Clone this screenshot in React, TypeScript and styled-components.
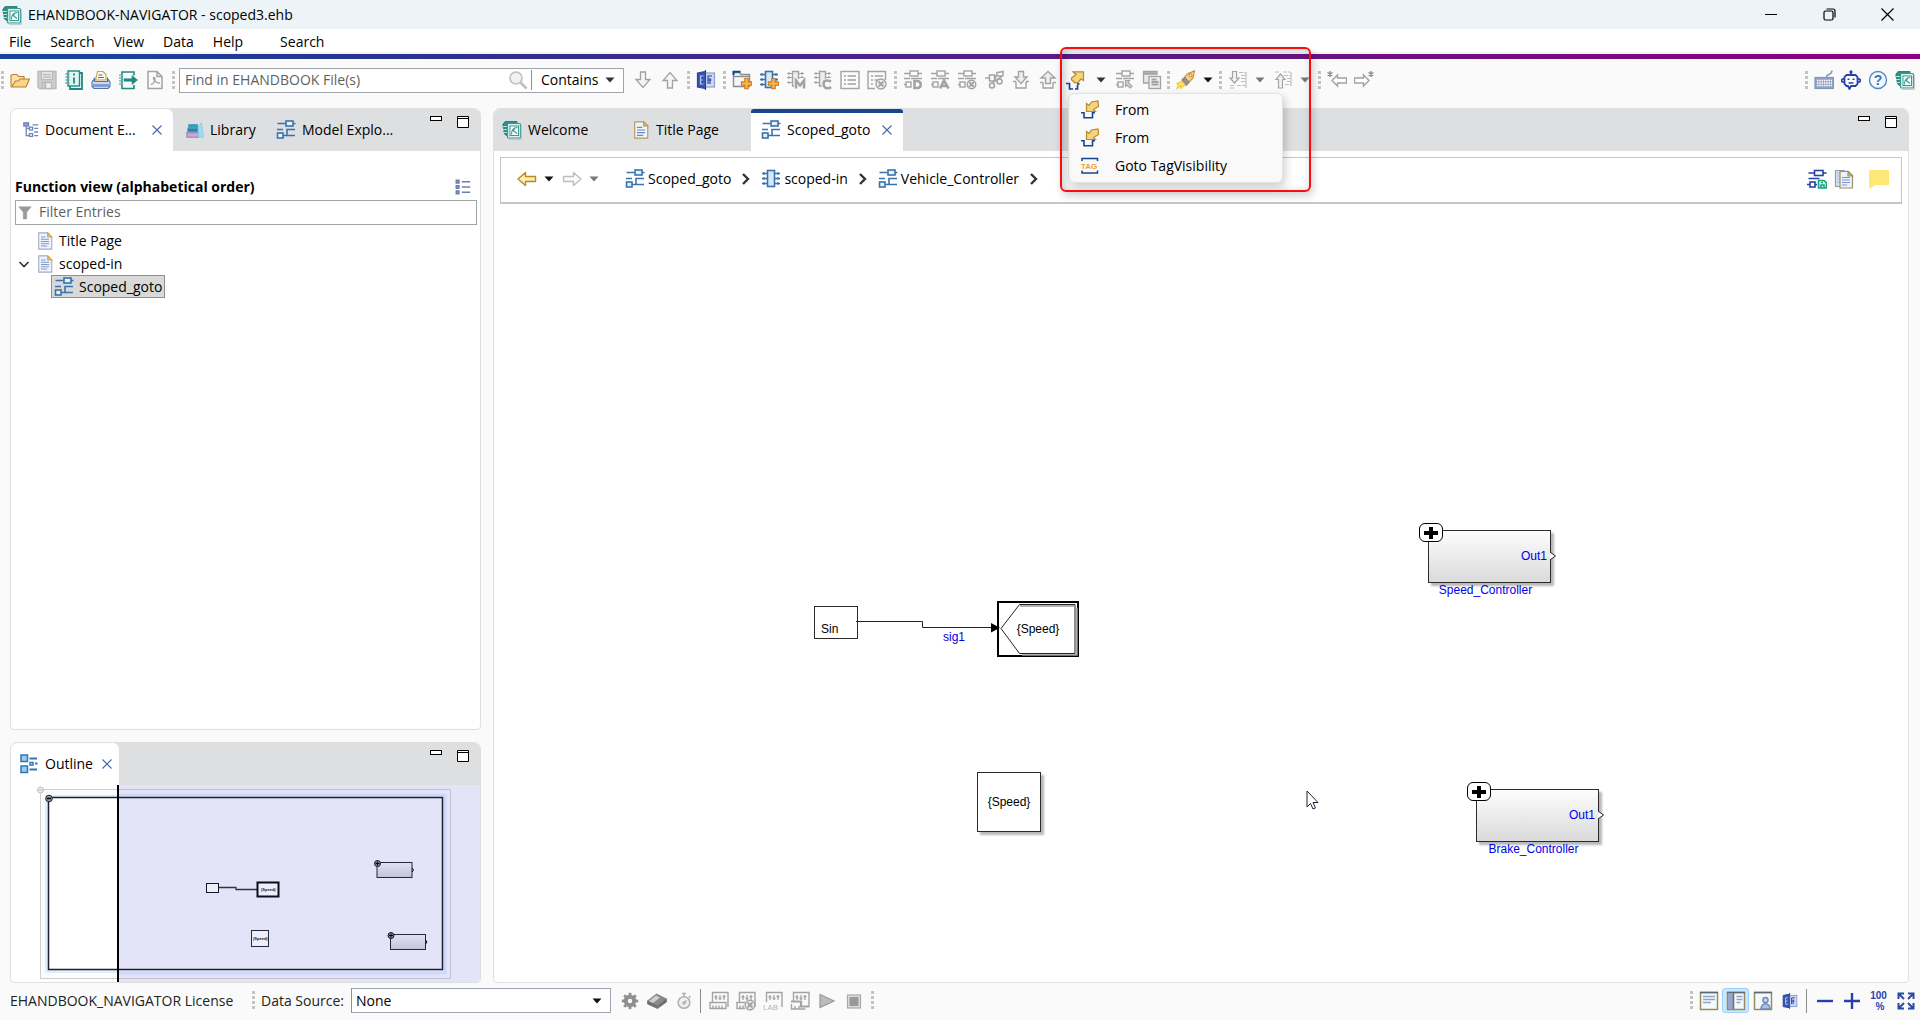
import React from "react";
import styled, { createGlobalStyle, css } from "styled-components";

const uiFont = '"Open Sans", "Noto Sans", sans-serif';
const diagramFont = '"Liberation Sans", Arial, sans-serif';
const BLUE = "#3a72ab";
const NAVY = "#17468f";
const GREY = "#a3a3a3";
const TEAL = "#1f8a80";
const ROYAL = "#2743a6";

const GlobalStyle = createGlobalStyle`
  * { box-sizing: border-box; }
  body { margin: 0; background: #fafafa; color: #000; font: 14px/20px ${uiFont}; }
  button, input, select { font: inherit; color: inherit; }
`;

/* ---------- shell ---------- */

const Shell = styled.div`
  display: flex;
  flex-direction: column;
  min-height: 100vh;
`;

const TitleBar = styled.header`
  display: flex;
  align-items: center;
  height: 29px;
  padding: 0 17px 0 2px;
  gap: 6px;
  background: #ecf4f8;
`;

const WindowTitle = styled.h1`
  flex: 1;
  margin: 0;
  font-size: 14px;
  font-weight: 400;
`;

const WindowButtons = styled.div`
  display: flex;
  gap: 26px;
`;

const PlainButton = styled.button`
  display: inline-flex;
  align-items: center;
  justify-content: center;
  padding: 0;
  border: 0;
  background: transparent;
  flex: none;
`;

const WindowButton = styled(PlainButton)`
  width: 32px;
  height: 28px;
`;

const MenuBar = styled.nav`
  display: flex;
  align-items: center;
  height: 25px;
  padding: 2px 0 0 9px;
  gap: 19px;
  background: #fff;
  border-bottom: 2px solid #f3f3f5;
`;

const MenuButton = styled(PlainButton)<{ $apart?: boolean }>`
  height: 22px;
  margin-left: ${(p) => (p.$apart ? "18px" : "0")};
`;

const BrandStripe = styled.div`
  height: 5px;
  background: linear-gradient(90deg, #14469a 0%, #2f2f90 25%, #50208a 50%, #6c1280 70%, #8c0080 100%);
`;

/* ---------- toolbar ---------- */

const Toolbar = styled.div`
  display: flex;
  align-items: center;
  height: 42px;
  padding: 0 2px 0 0;
`;

const Spacer = styled.div`
  flex: 1;
`;

const Grip = styled.span<{ $tight?: boolean }>`
  flex: none;
  width: 6px;
  height: 19px;
  background: repeating-linear-gradient(180deg, #c3c3c3 0 3px, transparent 3px 5px) 1px 0 / 3px 19px no-repeat;
  &:not(:first-child) {
    margin-left: ${(p) => (p.$tight ? "1px" : "3px")};
  }
`;

const IconButton = styled(PlainButton)<{ $on?: boolean }>`
  width: 27px;
  height: 25px;
  ${(p) =>
    p.$on &&
    css`
      background: #cce8ff;
      border: 1px solid #99d1ff;
      border-radius: 3px;
    `}
`;

const ArrowButton = styled(PlainButton)<{ $wide?: boolean }>`
  width: ${(p) => (p.$wide ? "23px" : "18px")};
  padding-left: ${(p) => (p.$wide ? "3px" : "0")};
  height: 25px;
`;

const SearchField = styled.div`
  display: flex;
  align-items: center;
  width: 445px;
  height: 25px;
  margin: 0 5px 0 2px;
  padding: 0 6px 0 5px;
  background: #fff;
  border: 1px solid #a2a3a8;
`;

const BareInput = styled.input`
  flex: 1;
  min-width: 0;
  height: 22px;
  padding: 0 0 2px;
  border: 0;
  outline: 0;
  background: transparent;
  &::placeholder {
    color: #5f5f5f;
    opacity: 1;
  }
`;

const SelectWrap = styled.div<{ $width: number; $boxed?: boolean }>`
  display: flex;
  align-items: center;
  width: ${(p) => p.$width}px;
  height: ${(p) => (p.$boxed ? 25 : 20)}px;
  padding-right: ${(p) => (p.$boxed ? 8 : 2)}px;
  background: #fff;
  border: ${(p) => (p.$boxed ? "1px solid #a2a3b0" : "0")};
  border-left: 1px solid #8f8f94;
`;

const BareSelect = styled.select`
  appearance: none;
  flex: 1;
  min-width: 0;
  height: 22px;
  padding: 0 4px 0 9px;
  border: 0;
  outline: 0;
  background: transparent;
`;

const DataSelect = styled(BareSelect)`
  padding-left: 4px;
`;

const GotoGroup = styled.div`
  position: relative;
  display: flex;
  align-items: center;
`;

const Callout = styled.div`
  position: absolute;
  z-index: 5;
  left: -1px;
  top: -21px;
  width: 251px;
  height: 145px;
  border: 2px solid #f80d10;
  border-radius: 6px;
  box-shadow: inset 2px 2px 8px rgba(0, 0, 0, 0.22), 2px 4px 8px rgba(0, 0, 0, 0.18);
  pointer-events: none;
`;

const PopupMenu = styled.ul`
  position: absolute;
  z-index: 4;
  left: 7px;
  top: 25px;
  width: 215px;
  margin: 0;
  padding: 2px 0;
  list-style: none;
  background: #f9f9f9;
  border: 1px solid #e3e3e3;
  border-radius: 6px;
  box-shadow: 2px 4px 10px rgba(0, 0, 0, 0.2);
`;

const PopupItem = styled(PlainButton)`
  display: flex;
  width: 100%;
  height: 28px;
  padding-left: 11px;
  gap: 15px;
  justify-content: flex-start;
`;

/* ---------- panels ---------- */

const Workspace = styled.main`
  flex: 1;
  display: grid;
  grid-template-columns: 471px minmax(0, 1fr);
  gap: 12px;
  padding: 7px 11px 0 10px;
`;

const SideColumn = styled.div`
  display: flex;
  flex-direction: column;
  gap: 12px;
`;

const Panel = styled.section<{ $grow?: boolean }>`
  display: flex;
  flex-direction: column;
  flex: ${(p) => (p.$grow ? "1" : "none")};
  overflow: hidden;
  background: #fff;
  border: 1px solid #dedfe1;
  border-radius: 7px 7px 4px 4px;
`;

const TabStrip = styled.div`
  display: flex;
  height: 42px;
  background: #dedfe1;
`;

const Tab = styled.div<{ $active?: boolean; $accent?: boolean; $width: number; $pad: number }>`
  display: flex;
  align-items: center;
  gap: 6px;
  width: ${(p) => p.$width}px;
  padding-left: ${(p) => p.$pad}px;
  background: ${(p) => (p.$active ? "#fff" : "transparent")};
  border-radius: ${(p) => (p.$accent ? "3px 3px 0 0" : "6px 6px 0 0")};
  border-top: ${(p) => (p.$accent ? `4px solid ${NAVY}` : "0")};
  padding-bottom: ${(p) => (p.$accent ? "4px" : "0")};
`;

const TabButton = styled(PlainButton)`
  gap: 6px;
  height: 30px;
  white-space: nowrap;
`;

const CloseButton = styled(PlainButton)`
  width: 16px;
  height: 16px;
  margin-left: auto;
  margin-right: 8px;
`;

const PanelButtons = styled.div`
  display: flex;
  gap: 13px;
  margin-left: auto;
  padding: 6px 10px 0 0;
`;

const SquareButton = styled(PlainButton)`
  width: 14px;
  height: 14px;
`;

const ExplorerBody = styled.div`
  padding: 26px 3px 12px 4px;
`;

const ExplorerHeading = styled.div`
  display: flex;
  align-items: center;
  justify-content: space-between;
  height: 20px;
  padding-right: 6px;
`;

const Heading = styled.h2`
  margin: 0;
  font-size: 14px;
  line-height: 20px;
  font-weight: 700;
`;

const FilterField = styled.label`
  display: flex;
  align-items: center;
  height: 25px;
  margin-top: 3px;
  padding-left: 2px;
  gap: 7px;
  border: 1px solid #a2a3a8;
`;

const Tree = styled.ul`
  margin: 0;
  padding: 4px 0 0;
  list-style: none;
`;

const TreeRow = styled.li<{ $level: number }>`
  display: flex;
  align-items: center;
  height: 23px;
  padding-left: ${(p) => p.$level * 18}px;
`;

const Twisty = styled(PlainButton)`
  width: 18px;
  height: 20px;
`;

const TreeLabel = styled(PlainButton)<{ $selected?: boolean }>`
  gap: 5px;
  height: 23px;
  padding: 0 2px;
  border: 1px solid ${(p) => (p.$selected ? "#8f8f8f" : "transparent")};
  background: ${(p) => (p.$selected ? "#d9d9d9" : "transparent")};
`;

const OutlineView = styled.svg`
  display: block;
  width: 100%;
  height: 197px;
`;

/* ---------- editor ---------- */

const Breadcrumb = styled.nav`
  display: flex;
  align-items: center;
  height: 47px;
  margin: 6px 6px 0;
  padding: 0 9px 3px 12px;
  border: 1px solid #c6c6c8;
  border-bottom-width: 2px;
`;

const Crumbs = styled.ol`
  display: flex;
  align-items: center;
  margin: 0 0 0 22px;
  padding: 0;
  list-style: none;
`;

const Crumb = styled.li`
  display: flex;
  align-items: center;
`;

const CrumbLink = styled.a`
  display: flex;
  align-items: center;
  gap: 3px;
  color: inherit;
  text-decoration: none;
`;

const CrumbChevron = styled.span`
  display: flex;
  justify-content: center;
  width: 30px;
`;

const NoteButton = styled(IconButton)`
  margin-left: 8px;
`;

const Canvas = styled.div`
  position: relative;
  flex: 1;
  min-height: 700px;
  overflow: hidden;
  font: 12px/14px ${diagramFont};
`;

const Wires = styled.svg`
  position: absolute;
  left: 0;
  top: 0;
  width: 100%;
  height: 100%;
`;

interface Box {
  $x: number;
  $y: number;
  $w: number;
  $h: number;
}

const Block = styled.div<Box & { $shade?: boolean; $shadow?: boolean }>`
  position: absolute;
  left: ${(p) => p.$x}px;
  top: ${(p) => p.$y}px;
  width: ${(p) => p.$w}px;
  height: ${(p) => p.$h}px;
  display: flex;
  align-items: center;
  justify-content: center;
  border: 1px solid #2b2b2b;
  background: ${(p) => (p.$shade ? "linear-gradient(180deg, #fdfdfd, #dadada)" : "#fff")};
  box-shadow: ${(p) => (p.$shadow ? "3px 3px 2px rgba(0, 0, 0, 0.28)" : "none")};
`;

const SourceBlock = styled(Block)`
  align-items: flex-end;
  justify-content: flex-start;
  padding: 0 0 2px 6px;
`;

const GotoBlock = styled(Block)`
  border: 2px solid #000;
  background: transparent;
`;

const SubsystemBlock = styled(Block)`
  justify-content: flex-end;
  padding: 0 3px 1px 0;
  color: #0000e6;
`;

const Expand = styled(PlainButton)`
  position: absolute;
  left: -10px;
  top: -8px;
  width: 24px;
  height: 19px;
  border: 1px solid #000;
  border-radius: 6px;
  background: #fff;
`;

const Port = styled.svg`
  position: absolute;
  right: -7px;
  top: 20px;
`;

const BlockName = styled.span`
  position: absolute;
  left: 0;
  right: 8px;
  top: 52px;
  text-align: center;
`;

const SignalName = styled.span<{ $x: number; $y: number }>`
  position: absolute;
  left: ${(p) => p.$x}px;
  top: ${(p) => p.$y}px;
  color: #0000e6;
`;

const Pointer = styled.svg<{ $x: number; $y: number }>`
  position: absolute;
  left: ${(p) => p.$x}px;
  top: ${(p) => p.$y}px;
`;

/* ---------- status bar ---------- */

const StatusBar = styled.footer`
  display: flex;
  align-items: center;
  height: 37px;
  padding: 0 1px 2px 10px;
`;

const StatusText = styled.span`
  width: 238px;
  color: #222;
`;

const StatusLabel = styled.label`
  width: 94px;
  padding-left: 4px;
  color: #222;
`;

const StatusTools = styled.div`
  display: flex;
  align-items: center;
  margin-left: 5px;
`;

const Divider = styled.span`
  width: 1px;
  height: 24px;
  margin: 0 4px 0 3px;
  background: #8b8b8b;
`;

/* ---------- icons ---------- */

interface GlyphProps {
  children: React.ReactNode;
  size?: number;
  color?: string;
  w?: number;
}

function Glyph({ children, size = 20, color = GREY, w = 1.5 }: GlyphProps) {
  return (
    <svg width={size} height={size} viewBox="0 0 20 20" fill="none" stroke={color} strokeWidth={w} aria-hidden="true">
      {children}
    </svg>
  );
}

const LogoIcon = () => (
  <Glyph color="#3a9b92" w={1.2}>
    <path d="M.8 4.500 3 1.500h12v2H6v13l-3.500-2.500z" fill="#2b8f86" stroke="#1d756d" strokeWidth="0.8" />
    <path d="M1 6.500h4M1 9.500h4M1.500 12.500h4" stroke="#bfe3df" strokeWidth="1" />
    <rect x="5.500" y="3.500" width="13" height="14.500" rx="1" fill="#d9f0ed" />
    <rect x="8" y="6" width="8.500" height="9.500" fill="#fff" strokeWidth="1" />
    <path d="M9.500 14.500c0-4 2-7 6-7M10.500 10l4.500 3.500M13 7.500l-1.500 3" strokeWidth="1.200" />
    <path d="M19.300 5v14.200H7" stroke="#b6bcbc" strokeWidth="1" />
  </Glyph>
);

const DiagramIcon = () => (
  <Glyph color={BLUE} w={1.6}>
    <path d="M1.500 3.500h8M17 3.500h2.500M1 9.500h6M11 15.500v-6h8M7 15.500h12" />
    <rect x="10" y="1" width="7" height="5" fill="#e6f2fc" />
    <rect x="1.500" y="13" width="5.500" height="5" fill="#e6f2fc" />
  </Glyph>
);
const GreyDiagram = ({ children }: { children: React.ReactNode }) => (
  <Glyph w={1.4}>
    <path d="M1 3.500h6M15 3.500h4M1 8.500h6M1 14.500h2M8 8.500h11" />
    <rect x="7" y="1" width="8" height="5" />
    <rect x="3" y="12" width="5" height="5" />
    {children}
  </Glyph>
);
const DiagramDIcon = () => (
  <GreyDiagram>
    <path d="M11.500 11v7h2.500c5 0 5-7 0-7z" fill="#fff" strokeWidth="2.600" />
  </GreyDiagram>
);
const DiagramAIcon = () => (
  <GreyDiagram>
    <path d="m10 18.500 4-8 4.500 8M12 16h5" fill="#fff" strokeWidth="2.600" />
  </GreyDiagram>
);
const DiagramXIcon = () => (
  <GreyDiagram>
    <circle cx="14.500" cy="14.500" r="4.300" fill="#f2f2f2" />
    <path d="m12 12 5 5m0-5-5 5" strokeWidth="1.800" />
  </GreyDiagram>
);
const DiagramHandIcon = () => (
  <GreyDiagram>
    <path d="M10.500 10.500h4l-1.500 2 4 3.500-1.500 2-4-3-1 2z" fill="#d5d5d5" strokeWidth="1.200" />
  </GreyDiagram>
);

const ChipMarks = () => (
  <>
    <path d="M1 4.500h5M1 9.500h5M1 14.500h5M13.500 4.500h5.500M13.500 9.500h5.500M13.500 14.500h5.500" strokeWidth="1.300" />
    <rect x="6.500" y="1.500" width="7" height="16" fill="#d6e9f8" />
    <path d="M3 3v3M3 8v3M3 13v3M17 3v3M17 8v3M17 13v3" strokeWidth="1.200" />
  </>
);
const ChipIcon = () => (
  <Glyph color={BLUE} w={1.6}>
    <ChipMarks />
  </Glyph>
);
const PlusBadge = () => (
  <path
    d="M12.800 8.500h3.400v3.400h3.400v3.400h-3.400v3.400h-3.400v-3.400H9.400v-3.400h3.400z"
    fill="#fdb24d"
    stroke="#d07a1c"
    strokeWidth="1.1"
  />
);
const ChipPlusIcon = () => (
  <Glyph color={BLUE} w={1.6}>
    <ChipMarks />
    <PlusBadge />
  </Glyph>
);
const ChipLetterIcon = ({ d }: { d: string }) => (
  <Glyph w={1.4}>
    <path d="M1 3.500h5M1 7.500h5M1 12.500h5M12.500 3.500H18M12.500 7.500H18M3 2v3M3 6v3M3 11v3M16 2v3M16 6v2" strokeWidth="1.100" />
    <path d="M9 16H6.500V1.500h6V9" fill="#ececec" />
    <path d={d} stroke="#fafafa" strokeWidth="4.200" />
    <path d={d} strokeWidth="2.600" />
  </Glyph>
);

const FolderPlusIcon = () => (
  <Glyph color="#8a8c90" w={1.4}>
    <path d="M1.500 16.500V2.500h6l1.500 2h8.500v12z" fill="#f4f5f6" />
    <path d="M1.500 5V1.800h7" stroke={NAVY} strokeWidth="2" />
    <path d="M1.500 6.500h16" />
    <PlusBadge />
  </Glyph>
);
const ListIcon = () => (
  <Glyph w={1.4}>
    <rect x="1" y="1.500" width="18" height="17" />
    <path d="M4 6h2M4 10h2M4 14h2M7.500 6h8.500M7.500 10h8.500M7.500 14h8.500" />
  </Glyph>
);
const ListXIcon = () => (
  <Glyph w={1.4}>
    <path d="M8 18.500H1v-17h17.500V10" />
    <path d="M4 6h2M4 10h2M4 14h2M7.500 6h8.500M7.500 10h4" />
    <circle cx="14" cy="14" r="5" fill="#f0f0f0" />
    <path d="m11.500 11.500 5 5m0-5-5 5" strokeWidth="1.800" />
  </Glyph>
);
const ScissorsIcon = () => (
  <Glyph w={1.5}>
    <path d="M1 8h4.500M5.500 5h5v6h-5zM12 3l7-1.500v4L11 11M14 1.500 11 9M13 6h6" />
    <circle cx="8" cy="15.500" r="2.500" />
    <circle cx="15.500" cy="11.500" r="2.500" />
    <path d="m9 13 2-3 2.500 1" />
  </Glyph>
);
const ArrowDownIcon = () => (
  <Glyph w={1.3}>
    <path d="M7.500 2h5v7.500H17L10 17.500 3 9.500h4.500z" fill="#f5f5f5" />
  </Glyph>
);
const ArrowUpIcon = () => (
  <Glyph w={1.3}>
    <path d="M7.500 18h5v-7.500H17L10 2.500 3 10.500h4.500z" fill="#f5f5f5" />
  </Glyph>
);
const DownIntoIcon = () => (
  <Glyph w={1.4}>
    <path d="M2 11.500h3M15 11.500h3M5 11.500v6.500h10v-6.500" />
    <path d="M7.500 1.500h5V7H16l-6 6.500L4 7h3.500z" fill="#eee" />
  </Glyph>
);
const UpOutIcon = () => (
  <Glyph w={1.4}>
    <path d="M2 12.500h3M15 12.500h3M5 12.500v5.500h10v-5.500" />
    <path d="M7.500 13.500h5V8H17l-7-6.500L3 8h4.500z" fill="#eee" />
  </Glyph>
);
const GotoIcon = () => (
  <Glyph color={NAVY} w={1.7}>
    <path d="M1 13.500h3.500V19H8M10 19h2.500v-4M12 13.800h2.500" />
    <path
      d="M8 1.800h10.500v8.700l-2.500-1.500-3.500 3.800h-2.500l-3.500-3V8l4.500-3.500z"
      fill="#f7d47c"
      stroke="#b58a2c"
      strokeWidth="1.200"
    />
  </Glyph>
);
const FromIcon = () => (
  <Glyph color={NAVY} w={1.6}>
    <path d="M1 12.800h3v5h8.500v-5H15" />
    <path
      d="M6.500 11.500V3.500L9 5.500l2.500-3.500 6.500-1 .5 5.500-5 3 2 2z"
      fill="#f7d47c"
      stroke="#b58a2c"
      strokeWidth="1.200"
    />
  </Glyph>
);
const TagText = styled.text`
  font: 700 8px ${diagramFont};
  fill: #f0a030;
  stroke: none;
`;
const TagIcon = () => (
  <Glyph color={NAVY} w={1.5}>
    <path d="M2 5V2.500h15.500V5M2 14.500V17h15.500v-2.500" />
    <TagText x="1" y="12.500">TAG</TagText>
  </Glyph>
);
const WindowsIcon = () => (
  <Glyph w={1.3}>
    <path d="M7 13H1.500V1.500H15V5" fill="#e8e8e8" />
    <path d="M1.500 3.500H15" strokeWidth="2.500" />
    <rect x="7" y="6.500" width="11.500" height="12" fill="#eee" />
    <path d="M9.500 9.500h5M9.500 12h7M9.500 14.500h7" strokeWidth="2" />
  </Glyph>
);
const RocketIcon = () => (
  <Glyph color="#c98a2c" w={1.1}>
    <path d="M6 10 12 3.500 18.500 1l-1.500 7-7 7.500z" fill="#fbd58a" />
    <path d="M6 10l4.500 5 2.500-3-4-4.500z" fill="#9a9294" stroke="#87807f" />
    <circle cx="14.500" cy="5.500" r="1.500" fill="#fff" />
    <path d="M5.500 11 0.500 14l2-.3L1 18.500l4-3-.5 3L9 15z" fill="#ffe45c" stroke="#f7c948" />
  </Glyph>
);
const StepDownIcon = () => (
  <Glyph w={1.2}>
    <path d="M4.500 1.500h4V8H11l-4.500 5L2 8h2.500z" fill="#f3f3f3" />
    <path d="M11 2.500h6M13 5.500h4M13 8.500h4M13 11.500h4M9 15.500h8M2 15.500h5M2 18h5" strokeDasharray="4 1" stroke="#bcbcbc" />
    <path d="M18 2v16" stroke="#bcbcbc" />
  </Glyph>
);
const StepUpIcon = () => (
  <Glyph w={1.2}>
    <path d="M5.500 18h4v-8.500H12L7.500 4 3 9.500h2.500z" fill="#f3f3f3" />
    <path d="M2 2h5M10 2h7M11 5.500h6M14 8.500h3M14 11.500h3M12 14.500h5" strokeDasharray="4 1" stroke="#bcbcbc" />
    <path d="M18 2v14" stroke="#bcbcbc" />
  </Glyph>
);
const StarBackIcon = () => (
  <Glyph w={1.4}>
    <path d="m5 10.500 5.500-5.500v3H19.500v5h-9v3z" fill="#fff" />
    <path d="M3 1v6M.5 2.500l5 3M5.500 2.500l-5 3" strokeWidth="1.400" stroke="#8c8c8c" />
  </Glyph>
);
const StarForwardIcon = () => (
  <Glyph w={1.4}>
    <path d="m15 10.500-5.500-5.500v3H.5v5h9v3z" fill="#fff" />
    <path d="M17 1v6M14.500 2.500l5 3M19.500 2.500l-5 3" strokeWidth="1.400" stroke="#8c8c8c" />
  </Glyph>
);

const OpenIcon = () => (
  <Glyph color="#bd7d2e" w={1.1}>
    <path d="M1 16.500v-11l1.500-1h4.500l1.500 2h5.500v3" fill="#fbe3ae" />
    <path d="m1.500 17 4-6h3l1.500-2h9.500l-3.500 8z" fill="#fbd38c" />
  </Glyph>
);
const SaveIcon = () => (
  <Glyph color="#b9b9b9" w={1.4}>
    <path d="M1 1.500h18v17H2.500L1 17z" fill="#cfcfcf" />
    <rect x="4.500" y="1.500" width="11" height="8" fill="#f0f0f0" />
    <path d="M6 4.500h8M6 7h8" />
    <rect x="5.500" y="12.500" width="9" height="6" fill="#f0f0f0" />
    <path d="M8 13v5" strokeWidth="2.500" />
  </Glyph>
);
const NotebookIcon = () => (
  <Glyph color={TEAL} w={1.4}>
    <rect x="4" y="1" width="11.500" height="15" fill="#e3f4f2" />
    <path d="M15.500 3h2.500V19H6v-3" strokeWidth="1.800" />
    <path d="M1.500 4h4M1.500 7h4M1.500 10h4M1.500 13h4" stroke="#57a9a2" />
    <path d="M10 7.500v6M10 3.500v2" strokeWidth="1.800" />
  </Glyph>
);
const PrintIcon = () => (
  <Glyph color="#5572a8" w={1.1}>
    <path d="M4.500 10 6.500 1.500H12l3 3V10z" fill="#fff8e4" stroke="#c3a45c" />
    <path d="M7.500 5h4M7 7.500h6" />
    <path d="M3.500 8.500 1 12v4.500L3 18.500h14l2-2V12l-2.500-3.500v3h-13z" fill="#ccd8f0" />
    <path d="M2 15.500h16" stroke="#7f9bd2" strokeWidth="2.800" />
  </Glyph>
);
const ExportIcon = () => (
  <Glyph color={TEAL} w={1.6}>
    <path d="M16 5.500V2H4v16.500h12V15" />
    <path d="M1 5h4M1 8h4M1 11h4M1 14h4" stroke="#6bb5ae" strokeWidth="1.300" />
    <path d="M6 8.800h8V5.500L19.500 10 14 14.500v-3.300H6z" fill={TEAL} strokeWidth="0.600" />
  </Glyph>
);
const PdfIcon = () => (
  <Glyph w={1.5}>
    <path d="M3 1.500h9l5 5V18.500H3zM12 1.500v5h5" />
    <path d="M6 14.500c4-1 5-7 3-7s1 6 6 5.500" strokeWidth="1.300" />
  </Glyph>
);
const SearchIcon = () => (
  <Glyph color="#c0c0c0" w={1.6}>
    <circle cx="8" cy="8" r="6" fill="#f2f2f2" />
    <path d="m12.500 12.500 6 6" strokeWidth="2.600" />
  </Glyph>
);
const BookIcon = ({ size }: { size?: number }) => (
  <Glyph color={ROYAL} w={1.2} size={size}>
    <path d="M1.500 3 9.500 1.500v17L1.500 17z" fill="#3553ae" />
    <rect x="9.500" y="3" width="9" height="14" fill="#cfd9f1" stroke="#8b9fd4" />
    <path d="M7.500 6H4.500v8h3M4.500 10H7" stroke="#b9c7ec" />
    <path d="M12 14V6h4M12 10h3.500M14 8v6" />
    <path d="M9.500 0v20" stroke="#26356f" strokeWidth="0.900" />
  </Glyph>
);
const KeyboardIcon = () => (
  <Glyph color="#8397b3" w={1.2}>
    <path d="M12.500 7c0-4 5-1 5.500-6.500" strokeWidth="1.600" />
    <rect x="1" y="7.500" width="18.500" height="11" fill="#93a5bf" />
    <path d="M3 10.500h15M3 13h15M3 15.500h15" stroke="#fff" strokeWidth="1.500" strokeDasharray="1.500 0.800" />
  </Glyph>
);
const RobotIcon = () => (
  <Glyph color={ROYAL} w={1.8}>
    <path d="M10 5V3" />
    <circle cx="10" cy="2" r="1.200" fill={ROYAL} strokeWidth="1" />
    <path d="M5.500 5h9l2 2v7l-2 2H10l-1.500 3-1.500-3H5.500l-2-2V7zM3 8.500.8 9.500v2l2.200 1M17 8.500l2.200 1v2l-2.200 1" fill="#fff" />
    <path d="M6.500 9.200h2M11.500 9.200h2M7.500 13h5" strokeWidth="1.600" />
  </Glyph>
);
const HelpText = styled.text`
  font: 700 14px ${diagramFont};
  fill: #3f74ad;
  stroke: none;
`;
const HelpIcon = () => (
  <Glyph color="#5589bd" w={1.4}>
    <circle cx="10" cy="10" r="8.500" fill="#f3f9ff" />
    <HelpText x="10" y="15" textAnchor="middle">?</HelpText>
  </Glyph>
);
const Triangle = ({ color = "#111" }: { color?: string }) => (
  <svg width="10" height="6" viewBox="0 0 10 6" aria-hidden="true">
    <path d="M.5.500h9L5 5.500z" fill={color} />
  </svg>
);
const CloseX = () => (
  <svg width="12" height="12" viewBox="0 0 12 12" aria-hidden="true">
    <path d="m1.500 1.500 9 9m0-9-9 9" stroke="#4066b0" strokeWidth="1.100" fill="none" />
  </svg>
);
const MinIcon = () => (
  <svg width="14" height="14" viewBox="0 0 14 14" aria-hidden="true">
    <rect x="1.500" y="1.500" width="11" height="4" fill="#fff" stroke="#000" />
  </svg>
);
const MaxIcon = () => (
  <svg width="14" height="14" viewBox="0 0 14 14" aria-hidden="true">
    <path d="M1.500 1.500h11v11h-11zM1.500 3.500h11" fill="#fff" stroke="#000" />
  </svg>
);
const TreeIcon = () => (
  <Glyph size={16} color="#6c86b8" w={1.6}>
    <path d="M4 4v13h4M4 8h4M12 3.500h7M14 8h5M14 12.500h5M14 17h5" />
    <rect x="1" y="1" width="6" height="4" fill="#8fa5cf" />
    <rect x="8" y="6.500" width="4" height="3.500" fill="#fff" />
    <rect x="8" y="14.500" width="4" height="3.500" fill="#fff" />
  </Glyph>
);
const LibraryIcon = () => (
  <Glyph size={18} color="#4a9db5" w={1}>
    <rect x="3" y="4" width="10" height="3.500" fill="#24a3b3" />
    <rect x="2" y="8" width="11" height="4" fill="#1a8aa8" />
    <rect x="1" y="13" width="13" height="5" fill="#c8a6d8" stroke="#9870b0" />
    <path d="m14 7 3-5 2.500 16H14z" fill="#a6dcf2" stroke="#8accea" />
  </Glyph>
);
const ListViewIcon = () => (
  <Glyph size={16} color="#6c7fae" w={1.7}>
    <path d="M1.500 1.500h3.500V5H1.500zM1.500 8.300h3.500v3.400H1.500zM1.500 15h3.500v3.500H1.500z" fill="#7f93c4" />
    <path d="M8.500 3.500h10.500M8.500 10h10.500M8.500 16.500h10.500" />
  </Glyph>
);
const FunnelIcon = () => (
  <Glyph size={14} color="#8d8d8d" w={0.5}>
    <path d="M1 1h18l-6.500 8v9.500h-5V9z" fill="#999" />
  </Glyph>
);
const PageIcon = () => (
  <Glyph size={18} color="#9fadc4" w={1.2}>
    <path d="M3 1h10l4.500 4.500V19H3z" fill="#eef4ff" />
    <path d="M13 1v4.500h4.500z" fill="#f0c46a" stroke="#d1a450" />
    <path d="M5.500 5.500h5M5.500 8h9M5.500 10.500h9M5.500 13h9M5.500 15.500h7" stroke="#7f98c8" />
  </Glyph>
);
const GoldPageIcon = () => (
  <Glyph size={18} color="#b59b5c" w={1.3}>
    <path d="M3 1h10l4.500 4.500V19H3z" fill="#eef3fd" />
    <path d="M13 1v4.500h4.500z" fill="#f0c46a" />
    <path d="M5.500 7h6M5.500 10h9M5.500 13h9M5.500 16h7" stroke="#6f88bc" />
  </Glyph>
);
const PagesIcon = () => (
  <Glyph color="#a08e68" w={1.2}>
    <path d="M1.500 1.500h9v16h-9z" fill="#d9e5f3" stroke="#9a9c98" />
    <path d="M3 4h3M3 7h3M3 10h3M3 13h3" stroke="#9db4d4" />
    <path d="M6 2.500h8.500l4 4V19H6z" fill="#e9f1fc" />
    <path d="M14 2.500v4.500h4.500z" fill="#f0c46a" />
    <path d="M8 8.500h8M8 11h8M8 13.500h8M8 16h5" stroke="#7f98c8" />
  </Glyph>
);
const DiagramSaveIcon = () => (
  <Glyph color={ROYAL} w={1.6}>
    <path d="M1.500 4h6M16 4h3.500M1.500 9.500h11M0 15.500h3M8 15.500h2" />
    <rect x="7.500" y="1.500" width="8.500" height="5" />
    <rect x="3" y="13" width="5" height="5" />
    <path d="M11.500 11.500h5.500l2.500 2.500v5h-8z" fill="#d8f4ea" stroke="#1ba37c" />
    <path d="M14 19v-3h3v3M14 13.500h2" stroke="#1ba37c" />
  </Glyph>
);
const NoteIcon = () => (
  <svg width="22" height="20" viewBox="0 0 22 20" aria-hidden="true">
    <path d="M2 1h18a1 1 0 0 1 1 1v14H7l-4.500 3.500L1 18V2a1 1 0 0 1 1-1z" fill="#fde777" />
  </svg>
);
const BackIcon = () => (
  <Glyph color="#b98a1f" w={1.4}>
    <path d="m1 10 7.500-6.500v4h10v5h-10v4z" fill="#fdeeb4" strokeLinejoin="round" />
  </Glyph>
);
const ForwardIcon = () => (
  <Glyph color="#bdbdbd" w={1.4}>
    <path d="m19 10-7.500-6.500v4h-10v5h10v4z" fill="#fbfbfb" strokeLinejoin="round" />
  </Glyph>
);
const ChevronIcon = ({ down }: { down?: boolean }) => (
  <svg width="12" height="12" viewBox="0 0 12 12" fill="none" stroke="#333" aria-hidden="true">
    {down ? <path d="m1.500 4 4.500 4.500L10.500 4" strokeWidth="1.600" /> : <path d="m3 1 5 5-5 5" strokeWidth="2.400" />}
  </svg>
);
const OutlineIcon = () => (
  <Glyph color="#2f76b5" w={1.5}>
    <rect x="2" y="1" width="6.500" height="6.500" fill="#9dcaf0" />
    <rect x="2" y="12" width="6.500" height="6.500" fill="#9dcaf0" />
    <path d="M10.500 4.500H18M16 9.500h2.500M10.500 15.500H18" strokeWidth="1.800" />
    <rect x="11" y="8.500" width="3" height="2.500" />
  </Glyph>
);

const gearTeeth = [0, 45, 90, 135, 180, 225, 270, 315];
const GearIcon = () => (
  <Glyph color="#8f8f8f" w={2.8}>
    {gearTeeth.map((a) => (
      <path key={a} d="M10 5V1.800" transform={`rotate(${a} 10 10)`} />
    ))}
    <circle cx="10" cy="10" r="4.200" strokeWidth="4" />
  </Glyph>
);
const HardwareIcon = () => (
  <Glyph color="#777" w={0.8}>
    <path d="M.5 10 9.500 3 19.500 8 10.500 15z" fill="#8a8a8a" />
    <path d="M.5 10v3l10 4.500V15zM10.500 15v2.500l9-6.500V8z" fill="#6b6b6b" />
    <path d="M2 10 9 4.500l4 2L6 12z" fill="#cfcfcf" stroke="none" />
  </Glyph>
);
const StopwatchIcon = () => (
  <Glyph color="#b0b0b0" w={1.5}>
    <circle cx="10" cy="11.500" r="5.800" fill="#f0f0f0" />
    <path d="M8 2.500h4M10 3v3M15 5l1.500 1.500M10 12l2.500-2.500" />
    <circle cx="10" cy="12" r="1" fill="#888" />
  </Glyph>
);
const MeterIcon = ({ children }: { children: React.ReactNode }) => (
  <Glyph w={1.4}>
    <path d="M3.500 11V1.500h15.500V16" />
    <path d="M7 4v5M11 4v5M15 4v5M5.500 6h3M9.500 7.500h3M13.500 5.500h3" strokeWidth="1.300" />
    {children}
  </Glyph>
);
const MeterRulerIcon = () => (
  <MeterIcon>
    <path d="M1 11.500h16v6H1zM4 14.500V17M7 14.500V17M10 14.500V17M13 14.500V17" />
  </MeterIcon>
);
const MeterXIcon = () => (
  <MeterIcon>
    <path d="M9 11.500H1v6h8M4 14.500V17M7 14.500V17" />
    <circle cx="14" cy="14" r="4.800" fill="#eee" />
    <path d="m11.500 11.500 5 5m0-5-5 5" strokeWidth="1.800" />
  </MeterIcon>
);
const LabText = styled.text`
  font: 8px ${diagramFont};
  fill: #b5b5b5;
  stroke: none;
`;
const MeterLabIcon = () => (
  <MeterIcon>
    <LabText x="0" y="18.500">LAB</LabText>
  </MeterIcon>
);
const MeterWaveIcon = () => (
  <MeterIcon>
    <path d="M1 10.500h10v5h8" strokeWidth="2.200" />
    <path d="M1.500 13v5h14M5 15v3M9 15v3" />
  </MeterIcon>
);
const PlayIcon = () => (
  <Glyph color="#999" w={1.2}>
    <path d="M3 3.500 17 10 3 16.500z" fill="#bdbdbd" />
  </Glyph>
);
const StopIcon = () => (
  <Glyph color="#aaa" w={1.2}>
    <rect x="3.500" y="4" width="13" height="13" fill="#ddd" />
    <rect x="5.500" y="6" width="9" height="9" fill="#999" stroke="none" />
  </Glyph>
);
const FrameMarks = () => (
  <>
    <rect x="1.500" y="1.500" width="17" height="17" fill="#f3f9fc" stroke="#9c8b5a" />
    <path d="M1 1.500h18" stroke="#5d6a74" strokeWidth="1.500" />
  </>
);
const PageFrameIcon = () => (
  <Glyph color="#8fa3c4">
    <FrameMarks />
    <path d="M4 5.500h12M4 8.500h12M4 11.500h8" />
  </Glyph>
);
const SplitFrameIcon = () => (
  <Glyph color="#8fa3c4">
    <FrameMarks />
    <rect x="2" y="2" width="5" height="16" fill="#93a8cc" stroke="none" />
    <path d="M7.500 2v16" stroke="#77704f" />
    <path d="M10.500 5.500h6M10.500 8.500h6M10.500 11.500h4" />
  </Glyph>
);
const PersonFrameIcon = () => (
  <Glyph color="#6f8cb8">
    <FrameMarks />
    <circle cx="12.500" cy="9" r="2.600" fill="#c9d8ee" />
    <path d="M8 18c0-7 9-7 9 0z" fill="#a9c1e2" />
  </Glyph>
);
const MinusIcon = () => (
  <Glyph color="#2a3eb1" w={2.4}>
    <path d="M2 10h16" />
  </Glyph>
);
const PlusIcon = () => (
  <Glyph color="#2a3eb1" w={2.4}>
    <path d="M2 10h16M10 2v16" />
  </Glyph>
);
const HundredText = styled.text`
  font: 700 10px ${diagramFont};
  fill: #2a3eb1;
  stroke: none;
`;
const HundredIcon = () => (
  <Glyph>
    <HundredText x="9.500" y="8" textAnchor="middle">100</HundredText>
    <HundredText x="11" y="18.500" textAnchor="middle">%</HundredText>
  </Glyph>
);
const FitIcon = () => (
  <Glyph color="#2a4aa4" w={2}>
    <path d="M2.500 8V2.500H8M12 2.500h5.500V8M17.500 12v5.500H12M8 17.500H2.500V12M3 3l5 5M17 3l-5 5M3 17l5-5M17 17l-5-5" />
  </Glyph>
);

/* ---------- data-driven pieces ---------- */

type Tool = [string, React.ReactNode];

function Tools({ items }: { items: Tool[] }) {
  return (
    <>
      {items.map(([label, icon]) => (
        <IconButton key={label} type="button" aria-label={label}>
          {icon}
        </IconButton>
      ))}
    </>
  );
}

const fileTools: Tool[] = [
  ["Open", <OpenIcon />],
  ["Save", <SaveIcon />],
  ["Contents", <NotebookIcon />],
  ["Print", <PrintIcon />],
  ["Export", <ExportIcon />],
  ["Export PDF", <PdfIcon />],
];
const hitTools: Tool[] = [
  ["Next hit", <ArrowDownIcon />],
  ["Previous hit", <ArrowUpIcon />],
];
const blockTools: Tool[] = [
  ["New folder", <FolderPlusIcon />],
  ["New chip", <ChipPlusIcon />],
  ["Chip M", <ChipLetterIcon d="M10 18.500v-8l4 5 4-5v8" />],
  ["Chip C", <ChipLetterIcon d="M18 11.500c-6-2.500-8.500 0-7 4.500 1 2.500 5 3 7 1" />],
  ["List", <ListIcon />],
  ["Clear list", <ListXIcon />],
];
const signalTools: Tool[] = [
  ["Signal D", <DiagramDIcon />],
  ["Signal A", <DiagramAIcon />],
  ["Remove signal", <DiagramXIcon />],
  ["Cut", <ScissorsIcon />],
  ["Descend", <DownIntoIcon />],
  ["Ascend", <UpOutIcon />],
];
const viewTools: Tool[] = [
  ["Show in diagram", <DiagramHandIcon />],
  ["Windows", <WindowsIcon />],
];
const historyTools: Tool[] = [
  ["Previous edit", <StarBackIcon />],
  ["Next edit", <StarForwardIcon />],
];
const rightTools: Tool[] = [
  ["Keyboard", <KeyboardIcon />],
  ["Assistant", <RobotIcon />],
  ["Help", <HelpIcon />],
  ["About", <LogoIcon />],
];
const popupItems: Tool[] = [
  ["From", <FromIcon />],
  ["From", <FromIcon />],
  ["Goto TagVisibility", <TagIcon />],
];
const measureTools: Tool[] = [
  ["Settings", <GearIcon />],
  ["Hardware", <HardwareIcon />],
  ["Timer", <StopwatchIcon />],
];
const recorderTools: Tool[] = [
  ["Measure", <MeterRulerIcon />],
  ["Remove measurement", <MeterXIcon />],
  ["Labels", <MeterLabIcon />],
  ["Signals", <MeterWaveIcon />],
  ["Play", <PlayIcon />],
  ["Stop", <StopIcon />],
];
const zoomTools: Tool[] = [
  ["Zoom out", <MinusIcon />],
  ["Zoom in", <PlusIcon />],
  ["Zoom 100", <HundredIcon />],
  ["Fit", <FitIcon />],
];
const crumbs: Tool[] = [
  ["Scoped_goto", <DiagramIcon />],
  ["scoped-in", <ChipIcon />],
  ["Vehicle_Controller", <DiagramIcon />],
];

function MinMax() {
  return (
    <PanelButtons>
      <SquareButton type="button" aria-label="Minimize panel">
        <MinIcon />
      </SquareButton>
      <SquareButton type="button" aria-label="Maximize panel">
        <MaxIcon />
      </SquareButton>
    </PanelButtons>
  );
}

function Subsystem({ x, y, name }: { x: number; y: number; name: string }) {
  return (
    <SubsystemBlock $x={x} $y={y} $w={123} $h={53} $shade $shadow>
      Out1
      <Expand type="button" aria-label={`Expand ${name}`}>
        <svg width="14" height="12" viewBox="0 0 14 12" aria-hidden="true">
          <path d="M0 6h14M7 0v12" stroke="#000" strokeWidth="4" />
        </svg>
      </Expand>
      <Port width="8" height="10" viewBox="0 0 8 10" aria-hidden="true">
        <path d="m1 1 5.500 4L1 9" fill="#fff" stroke="#222" />
      </Port>
      <BlockName>{name}</BlockName>
    </SubsystemBlock>
  );
}

function MiniSubsystem({ x, y }: { x: number; y: number }) {
  return (
    <g transform={`translate(${x} ${y})`}>
      <rect x="0" y="0" width="35" height="15" fill="url(#miniShade)" stroke="#26263c" />
      <circle cx="0.500" cy="1" r="3" fill="#8c8ca0" stroke="#15152a" />
      <path d="M-1.500 1h4M.5-1v4" stroke="#000" />
      <path d="M35 5.500l1.500 2-1.500 2" stroke="#000" fill="none" />
    </g>
  );
}

const MiniLabel = styled.text`
  font: 700 4px ${diagramFont};
  fill: #15152a;
`;

function OutlineMap() {
  return (
    <OutlineView viewBox="0 0 469 197" preserveAspectRatio="none" aria-label="Diagram outline">
      <defs>
        <linearGradient id="miniShade" x1="0" y1="0" x2="0" y2="1">
          <stop offset="0" stopColor="#e2e2f5" />
          <stop offset="1" stopColor="#c3c3d8" />
        </linearGradient>
      </defs>
      <rect x="29.500" y="4.500" width="410" height="189" fill="#fafcff" stroke="#cfcfcf" />
      <rect x="34" y="10" width="400" height="178" fill="#e0edfb" />
      <rect x="38" y="13" width="393" height="172" fill="#fff" />
      <rect x="107" y="0" width="362" height="197" fill="#e4e4f9" />
      <path d="M107 4.500h332.500v189H107" fill="none" stroke="#c1c1d2" />
      <path d="M107 10h327v178H107" fill="none" stroke="#cdd8fa" strokeWidth="3" />
      <rect x="37.500" y="12.500" width="394" height="172" fill="none" stroke="#1d2030" strokeWidth="1.500" />
      <circle cx="29.500" cy="5" r="3" fill="#eee" stroke="#bdbdbd" />
      <path d="M27.500 5h4" stroke="#bdbdbd" />
      <circle cx="38" cy="13.500" r="3.300" fill="#9a9a9a" stroke="#222" />
      <path d="M36 13.500h4" stroke="#000" strokeWidth="1.300" />
      <rect x="195.500" y="98.500" width="12" height="9" fill="#eeeefb" stroke="#15152a" />
      <path d="M208 102.500h17v2h21" fill="none" stroke="#333345" strokeWidth="1.300" />
      <rect x="246.500" y="97.500" width="21" height="14" fill="#eeeefb" stroke="#0c0c1e" strokeWidth="2" />
      <MiniLabel x="250" y="106">(Speed)</MiniLabel>
      <rect x="240.500" y="145.500" width="17" height="16" fill="#eeeefb" stroke="#26263c" />
      <MiniLabel x="242" y="155">(Speed)</MiniLabel>
      <MiniSubsystem x={366} y={77.5} />
      <MiniSubsystem x={379.5} y={149.5} />
      <path d="M107 0v197" stroke="#000" strokeWidth="2" />
    </OutlineView>
  );
}

export default function App() {
  return (
    <Shell>
      <GlobalStyle />
      <TitleBar>
        <LogoIcon />
        <WindowTitle>EHANDBOOK-NAVIGATOR - scoped3.ehb</WindowTitle>
        <WindowButtons>
          <WindowButton type="button" aria-label="Minimize">
            <svg width="12" height="12" viewBox="0 0 12 12">
              <path d="M0 5.500h12" stroke="#000" />
            </svg>
          </WindowButton>
          <WindowButton type="button" aria-label="Restore">
            <svg width="13" height="13" viewBox="0 0 13 13" fill="none" stroke="#000" strokeWidth="1.200">
              <rect x="1" y="3" width="9" height="9" rx="1.500" />
              <path d="M3.500 1h6.500a2 2 0 0 1 2 2v6.500" />
            </svg>
          </WindowButton>
          <WindowButton type="button" aria-label="Close">
            <svg width="13" height="13" viewBox="0 0 13 13">
              <path d="m.5.500 12 12m0-12-12 12" stroke="#000" strokeWidth="1.200" />
            </svg>
          </WindowButton>
        </WindowButtons>
      </TitleBar>
      <MenuBar>
        {["File", "Search", "View", "Data", "Help"].map((m) => (
          <MenuButton key={m} type="button">
            {m}
          </MenuButton>
        ))}
        <MenuButton type="button" $apart>
          Search
        </MenuButton>
      </MenuBar>
      <BrandStripe />

      <Toolbar>
        <Grip />
        <Tools items={fileTools} />
        <Grip />
        <SearchField>
          <BareInput type="text" aria-label="Find in EHANDBOOK File(s)" placeholder="Find in EHANDBOOK File(s)" />
          <IconButton type="button" aria-label="Search">
            <SearchIcon />
          </IconButton>
          <SelectWrap $width={86}>
            <BareSelect aria-label="Match mode">
              <option>Contains</option>
            </BareSelect>
            <Triangle color="#333" />
          </SelectWrap>
        </SearchField>
        <Tools items={hitTools} />
        <Grip />
        <Tools items={[["Handbook", <BookIcon />]]} />
        <Grip />
        <Tools items={blockTools} />
        <Grip />
        <Tools items={signalTools} />
        <GotoGroup>
          <IconButton type="button" aria-label="Goto">
            <GotoIcon />
          </IconButton>
          <ArrowButton type="button" aria-label="Goto targets" $wide>
            <Triangle color="#333" />
          </ArrowButton>
          <PopupMenu>
            {popupItems.map(([label, icon], i) => (
              <li key={i}>
                <PopupItem type="button">
                  {icon}
                  {label}
                </PopupItem>
              </li>
            ))}
          </PopupMenu>
          <Callout />
        </GotoGroup>
        <Tools items={viewTools} />
        <Grip $tight />
        <Tools items={[["Launch", <RocketIcon />]]} />
        <ArrowButton type="button" aria-label="Launch options">
          <Triangle />
        </ArrowButton>
        <Grip $tight />
        <Tools items={[["Step down", <StepDownIcon />]]} />
        <ArrowButton type="button" aria-label="Step down options">
          <Triangle color="#777" />
        </ArrowButton>
        <Tools items={[["Step up", <StepUpIcon />]]} />
        <ArrowButton type="button" aria-label="Step up options">
          <Triangle color="#777" />
        </ArrowButton>
        <Grip />
        <Tools items={historyTools} />
        <Spacer />
        <Grip />
        <Tools items={rightTools} />
      </Toolbar>

      <Workspace>
        <SideColumn>
          <Panel $grow>
            <TabStrip>
              <Tab $active $width={162} $pad={12}>
                <TabButton type="button">
                  <TreeIcon />
                  Document E...
                </TabButton>
                <CloseButton type="button" aria-label="Close Document Explorer">
                  <CloseX />
                </CloseButton>
              </Tab>
              <Tab $width={93} $pad={13}>
                <TabButton type="button">
                  <LibraryIcon />
                  Library
                </TabButton>
              </Tab>
              <Tab $width={130} $pad={10}>
                <TabButton type="button">
                  <DiagramIcon />
                  Model Explo...
                </TabButton>
              </Tab>
              <MinMax />
            </TabStrip>
            <ExplorerBody>
              <ExplorerHeading>
                <Heading>Function view (alphabetical order)</Heading>
                <PlainButton type="button" aria-label="View options">
                  <ListViewIcon />
                </PlainButton>
              </ExplorerHeading>
              <FilterField>
                <FunnelIcon />
                <BareInput type="text" aria-label="Filter Entries" placeholder="Filter Entries" />
              </FilterField>
              <Tree>
                <TreeRow $level={1}>
                  <TreeLabel type="button">
                    <PageIcon />
                    Title Page
                  </TreeLabel>
                </TreeRow>
                <TreeRow $level={0}>
                  <Twisty type="button" aria-label="Collapse scoped-in">
                    <ChevronIcon down />
                  </Twisty>
                  <TreeLabel type="button">
                    <PageIcon />
                    scoped-in
                  </TreeLabel>
                </TreeRow>
                <TreeRow $level={2}>
                  <TreeLabel type="button" $selected>
                    <DiagramIcon />
                    Scoped_goto
                  </TreeLabel>
                </TreeRow>
              </Tree>
            </ExplorerBody>
          </Panel>
          <Panel>
            <TabStrip>
              <Tab $active $width={108} $pad={8}>
                <TabButton type="button">
                  <OutlineIcon />
                  Outline
                </TabButton>
                <CloseButton type="button" aria-label="Close Outline">
                  <CloseX />
                </CloseButton>
              </Tab>
              <MinMax />
            </TabStrip>
            <OutlineMap />
          </Panel>
        </SideColumn>

        <Panel>
          <TabStrip>
            <Tab $width={129} $pad={8}>
              <TabButton type="button">
                <LogoIcon />
                Welcome
              </TabButton>
            </Tab>
            <Tab $width={128} $pad={9}>
              <TabButton type="button">
                <GoldPageIcon />
                Title Page
              </TabButton>
            </Tab>
            <Tab $active $accent $width={152} $pad={10}>
              <TabButton type="button">
                <DiagramIcon />
                Scoped_goto
              </TabButton>
              <CloseButton type="button" aria-label="Close Scoped_goto">
                <CloseX />
              </CloseButton>
            </Tab>
            <MinMax />
          </TabStrip>
          <Breadcrumb>
            <Tools items={[["Back", <BackIcon />]]} />
            <ArrowButton type="button" aria-label="Back history">
              <Triangle />
            </ArrowButton>
            <Tools items={[["Forward", <ForwardIcon />]]} />
            <ArrowButton type="button" aria-label="Forward history">
              <Triangle color="#777" />
            </ArrowButton>
            <Crumbs>
              {crumbs.map(([label, icon]) => (
                <Crumb key={label}>
                  <CrumbLink href="#">
                    {icon}
                    {label}
                  </CrumbLink>
                  <CrumbChevron>
                    <ChevronIcon />
                  </CrumbChevron>
                </Crumb>
              ))}
            </Crumbs>
            <Spacer />
            <Tools items={[["Save diagram", <DiagramSaveIcon />], ["Copy pages", <PagesIcon />]]} />
            <NoteButton type="button" aria-label="Note">
              <NoteIcon />
            </NoteButton>
          </Breadcrumb>
          <Canvas>
            <SourceBlock $x={320} $y={402} $w={44} $h={33}>
              Sin
            </SourceBlock>
            <GotoBlock $x={503} $y={397} $w={82} $h={56}>
              {"{Speed}"}
            </GotoBlock>
            <Block $x={483} $y={568} $w={64} $h={60} $shadow>
              {"{Speed}"}
            </Block>
            <Subsystem x={934} y={326} name="Speed_Controller" />
            <Subsystem x={982} y={585} name="Brake_Controller" />
            <Wires aria-hidden="true">
              <path d="M362 417.500h66.500v6H500" fill="none" stroke="#222" />
              <path d="M497 419v9.500l9-4.700z" fill="#000" />
              <path d="M507 424.500 525.500 400.500H581v49h-55.500z" fill="none" stroke="#222" />
              <path d="M526 402h54M583 404v47H528" fill="none" stroke="#999" strokeWidth="1.500" />
            </Wires>
            <SignalName $x={449} $y={426}>sig1</SignalName>
            <Pointer $x={812} $y={586} width="14" height="21" viewBox="0 0 14 21" aria-hidden="true">
              <path d="M1 1v16l3.500-3.500 2.500 5.500 2.500-1-2.500-5.500h5z" fill="#fff" stroke="#223" />
            </Pointer>
          </Canvas>
        </Panel>
      </Workspace>

      <StatusBar>
        <StatusText>EHANDBOOK_NAVIGATOR License</StatusText>
        <Grip />
        <StatusLabel htmlFor="source">Data Source:</StatusLabel>
        <SelectWrap $width={260} $boxed>
          <DataSelect id="source">
            <option>None</option>
          </DataSelect>
          <Triangle />
        </SelectWrap>
        <StatusTools>
          <Tools items={measureTools} />
          <Divider />
          <Tools items={recorderTools} />
          <Grip />
        </StatusTools>
        <Spacer />
        <StatusTools>
          <Grip />
          <Tools items={[["Page view", <PageFrameIcon />]]} />
          <IconButton type="button" aria-label="Split view" $on>
            <SplitFrameIcon />
          </IconButton>
          <Tools items={[["Person view", <PersonFrameIcon />], ["Handbook view", <BookIcon size={16} />]]} />
          <Divider />
          <Tools items={zoomTools} />
        </StatusTools>
      </StatusBar>
    </Shell>
  );
}
